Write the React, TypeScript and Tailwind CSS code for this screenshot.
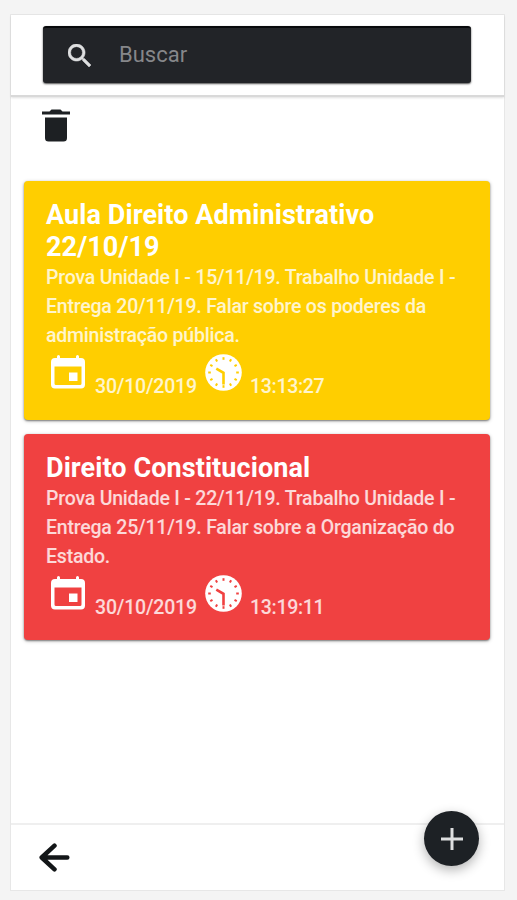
import { useState } from "react";

type Note = {
	id: number;
	title: string;
	text: string;
	date: string;
	time: string;
	color: string;
};

const notes: Note[] = [
	{
		id: 1,
		title: "Aula Direito Administrativo 22/10/19",
		text: "Prova Unidade I - 15/11/19. Trabalho Unidade I - Entrega 20/11/19. Falar sobre os poderes da administração pública.",
		date: "30/10/2019",
		time: "13:13:27",
		color: "bg-[#ffce00] h-[239px]",
	},
	{
		id: 2,
		title: "Direito Constitucional",
		text: "Prova Unidade I - 22/11/19. Trabalho Unidade I - Entrega 25/11/19. Falar sobre a Organização do Estado.",
		date: "30/10/2019",
		time: "13:19:11",
		color: "bg-[#f04141] h-[206px]",
	},
];

function SearchIcon() {
	return (
		<svg viewBox="3 3 17.5 17.5" className="h-[23px] w-[23px] shrink-0 fill-[#dedfe0] stroke-[#dedfe0]" strokeWidth="0.4">
			<path d="M15.5 14h-.79l-.28-.27A6.5 6.5 0 1 0 13.73 14.43l.27.28v.79l5 4.99L20.49 19zM9.5 14a4.5 4.5 0 1 1 0-9 4.5 4.5 0 0 1 0 9z" />
		</svg>
	);
}

function TrashIcon() {
	return (
		<svg viewBox="0 0 28 33" className="h-[33px] w-[28px] fill-[#1d2023]">
			<path d="M3 8.5h22V29a3.5 3.5 0 0 1-3.5 3.5h-15A3.5 3.5 0 0 1 3 29zM0 2.5h7.5L9.5.5h9l2 2H28v3H0z" />
		</svg>
	);
}

function CalendarIcon() {
	return (
		<svg viewBox="0 0 34 34" className="h-[34px] w-[34px] shrink-0 fill-white">
			<path
				fillRule="evenodd"
				d="M6 1.5a1.5 1.5 0 0 1 3 0V3h16V1.5a1.5 1.5 0 0 1 3 0V3h2a4 4 0 0 1 4 4v22.5a4 4 0 0 1-4 4H4a4 4 0 0 1-4-4V7a4 4 0 0 1 4-4h2zM3.5 11.5v17A1.5 1.5 0 0 0 5 30h24a1.5 1.5 0 0 0 1.5-1.5v-17z"
			/>
			<path d="M18 17.5h8.5V26H18z" />
		</svg>
	);
}

function ClockIcon({ stroke }: { stroke: string }) {
	const ticks = [0, 30, 60, 90, 120, 150, 180, 210, 240, 270, 300, 330];

	return (
		<svg viewBox="0 0 37 37" className={"h-[37px] w-[37px] shrink-0 " + stroke}>
			<circle cx="18.5" cy="18.5" r="18.3" fill="white" stroke="none" />
			{ticks.map((angle) => (
				<path key={angle} d="M18.5 3.2v2.6" strokeWidth="2" transform={`rotate(${angle} 18.5 18.5)`} />
			))}
			<path d="M18.5 30.5V18.8L11.3 14.6" fill="none" strokeWidth="2.6" />
		</svg>
	);
}

function NoteCard({ note }: { note: Note }) {
	return (
		<article className={"rounded-[4px] px-[22px] pt-[18px] text-white shadow-[0_1px_2px_rgba(0,0,0,0.45),0_1px_4px_rgba(0,0,0,0.2)] " + note.color}>
			<h2 className="text-[27px] leading-[32px] font-bold tracking-[0.08px]">{note.title}</h2>
			<p className="-mr-2 text-[19.5px] leading-[29px] font-medium tracking-[-0.21px] text-white/80">{note.text}</p>
			<div className="flex h-[50px] pl-[5px]">
				<div className="mt-[5px]">
					<CalendarIcon />
				</div>
				<span className="mt-[22px] ml-[10px] w-[110px] text-[19.5px] leading-[29px] font-medium tracking-[-0.2px] text-white/80">{note.date}</span>
				<div className="mt-[4px]">
					<ClockIcon stroke={note.id === 1 ? "stroke-[#ffce00]" : "stroke-[#f04141]"} />
				</div>
				<span className="mt-[22px] ml-[8px] text-[19.5px] leading-[29px] font-medium tracking-[-0.3px] text-white/80">{note.time}</span>
			</div>
		</article>
	);
}

export default function App() {
	const [search, setSearch] = useState("");

	const filtered = notes.filter((note) => note.title.toLowerCase().includes(search.toLowerCase()));

	return (
		<div className="h-[900px] w-[517px] bg-[#f4f4f4] pt-[14px] pl-[10px] font-['Roboto',sans-serif]">
			<div className="flex h-[877px] w-[495px] flex-col border border-[#e7e7e7] bg-white">
				<header className="z-10 h-[82px] shrink-0 border-b-2 border-[#d9d9d9] px-8 pt-[11px] shadow-[0_1px_2px_rgba(0,0,0,0.12)]">
					<label className="flex h-[57px] w-[428px] items-center rounded-[3px] border-t-2 border-[#08090b] bg-[#222428] pl-[25px] shadow-[0_1px_2px_rgba(0,0,0,0.7)]">
						<SearchIcon />
						<input
							className="mb-[3px] ml-[28px] w-[320px] bg-transparent text-[22px] text-white outline-none placeholder:text-[#86878a]"
							placeholder="Buscar"
							value={search}
							onChange={(e) => setSearch(e.target.value)}
						/>
					</label>
				</header>
				<main className="flex-1 pt-[12px] pr-[14px] pl-[13px]">
					<button className="ml-[18px] block" aria-label="Excluir">
						<TrashIcon />
					</button>
					<div className="mt-[39px] flex flex-col gap-[14px]">
						{filtered.map((note) => (
							<NoteCard key={note.id} note={note} />
						))}
					</div>
				</main>
				<footer className="relative flex h-[67px] shrink-0 items-center border-t-2 border-[#efefef] pl-[28px]">
					<button aria-label="Voltar">
						<svg viewBox="0 0 31 29" className="h-[29px] w-[31px] fill-none stroke-[#131618]" strokeWidth="4.5" strokeLinecap="round" strokeLinejoin="round">
							<path d="M15.5 2.7 2.7 14.5l12.8 11.8M3.5 14.5h24.8" />
						</svg>
					</button>
					<button
						className="absolute -top-[14px] right-[25px] flex h-[55px] w-[55px] items-center justify-center rounded-full bg-[#1d2125] shadow-[0_4px_12px_rgba(0,0,0,0.3)]"
						aria-label="Adicionar"
					>
						<svg viewBox="0 0 22 22" className="h-[22px] w-[22px] stroke-[#dedfe0]" strokeWidth="3">
							<path d="M11 0v22M0 11h22" />
						</svg>
					</button>
				</footer>
			</div>
		</div>
	);
}
